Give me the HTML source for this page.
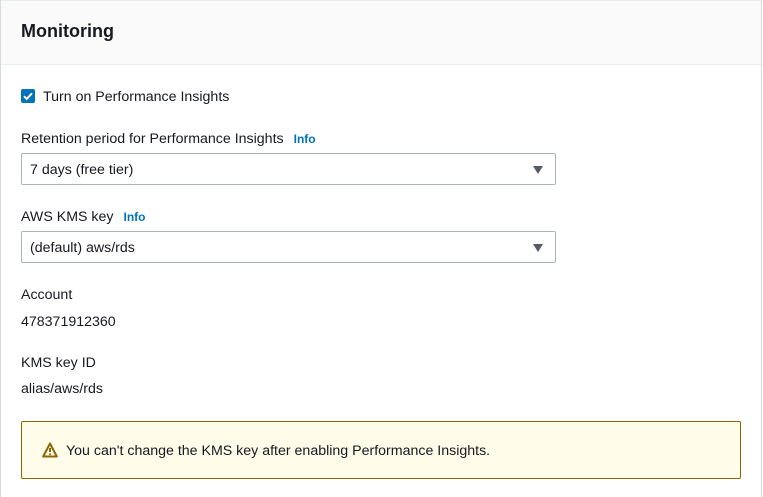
<!DOCTYPE html>
<html><head><style>
*{margin:0;padding:0;box-sizing:border-box}
body{width:763px;height:497px;background:#fff;font-family:"Liberation Sans",Arial,sans-serif;color:#16191f;font-size:14.2px;position:relative;overflow:hidden}
.frame{position:absolute;left:0;top:0;width:762px;height:497px;border-left:1px solid #d5dbdb;border-right:1px solid #d5dbdb}
.hdr{position:absolute;left:1px;top:0;width:760px;height:65px;background:#fafafa;border-bottom:1px solid #eaeded;border-top:1px solid #eaeded}
.t{position:absolute;white-space:nowrap}
.info{color:#0073bb;font-weight:bold;font-size:12px;margin-left:10px}
.sel{position:absolute;left:21px;width:535px;height:32px;border:1px solid #aab7b8;border-radius:2px;background:#fff}
.sel span{position:absolute;left:8px;top:8px}
.arr{position:absolute;right:12px;top:12px;width:0;height:0;border-left:5px solid transparent;border-right:5px solid transparent;border-top:8px solid #545b64}
.warn{position:absolute;left:21px;top:421px;width:720px;height:58px;background:#fffce9;border:1px solid #8d6605;border-radius:2px}
</style></head><body>
<div class="frame"></div>
<div class="hdr"></div>
<div class="t" style="left:21px;top:21px;font-size:18px;font-weight:bold">Monitoring</div>
<div style="position:absolute;left:21px;top:89px;width:14px;height:14px;background:#0073bb;border-radius:2px">
<svg width="14" height="14" viewBox="0 0 14 14"><path d="M3 7.2l2.7 2.7L11 4.3" fill="none" stroke="#fff" stroke-width="2"/></svg></div>
<div class="t" style="left:43px;top:89px">Turn on Performance Insights</div>
<div class="t" style="left:21px;top:131px">Retention period for Performance Insights<span class="info">Info</span></div>
<div class="sel" style="top:153px"><span>7 days (free tier)</span><div class="arr"></div></div>
<div class="t" style="left:21px;top:209px">AWS KMS key<span class="info">Info</span></div>
<div class="sel" style="top:231px"><span>(default) aws/rds</span><div class="arr"></div></div>
<div class="t" style="left:21px;top:287px">Account</div>
<div class="t" style="left:21px;top:314px">478371912360</div>
<div class="t" style="left:21px;top:355px">KMS key ID</div>
<div class="t" style="left:21px;top:381px">alias/aws/rds</div>
<div class="warn">
<svg style="position:absolute;left:20px;top:20px" width="16" height="16" viewBox="0 0 16 16"><path d="M8 1.5L1.2 14.5h13.6z" fill="none" stroke="#8d6605" stroke-width="2" stroke-linejoin="round"/><path d="M8 6v4" stroke="#8d6605" stroke-width="2"/><circle cx="8" cy="12.2" r="1" fill="#8d6605"/></svg>
<div class="t" style="left:44px;top:21px">You can't change the KMS key after enabling Performance Insights.</div>
</div>
</body></html>
